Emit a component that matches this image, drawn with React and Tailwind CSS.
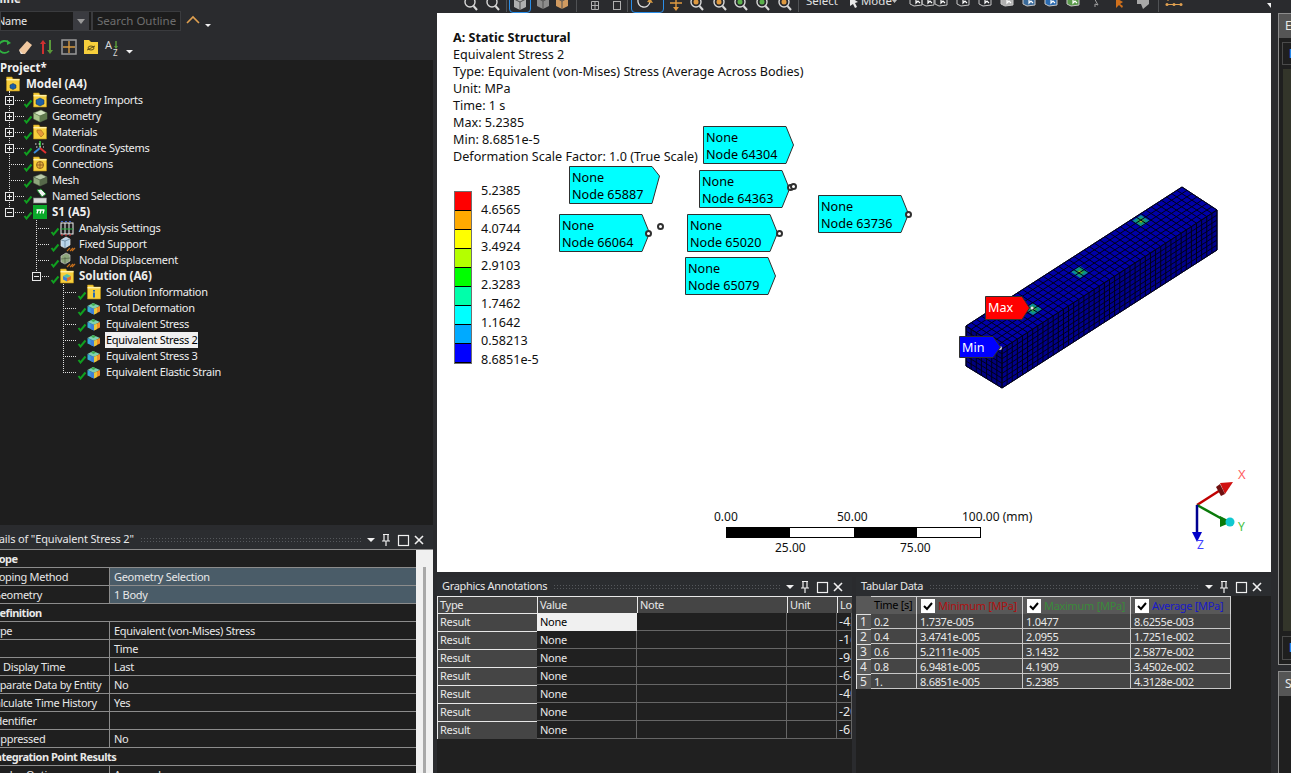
import React from 'react';

const FONT = "font-['Noto_Sans',sans-serif]";
const SMALL = 'text-[11px] tracking-[-0.3px]';

// small drawings used in the outline tree
const Folder = ({ x = 0, children }) => (
  <g transform={`translate(${x} 0)`}>
    <path d="M0.5 3 L0.5 1 L6 1 L7 3 L13.5 3 L13.5 15 L0.5 15 Z" fill="#f7cf3c" stroke="#b58a12" strokeWidth="0.6" />
    <rect x="0.5" y="3" width="13" height="1.4" fill="#fff0a8" />
    {children}
  </g>
);

const Cube = ({ x = 0, fill = '#a9c48c', dark = '#5f7a4d', top = '#d5e5c2' }) => (
  <g transform={`translate(${x} 0)`}>
    <path d="M0.5 5 L8 2 L14 5 L7 8 Z" fill={top} stroke={dark} strokeWidth="0.5" />
    <path d="M0.5 5 L7 8 L7 14 L0.5 11 Z" fill={fill} stroke={dark} strokeWidth="0.5" />
    <path d="M7 8 L14 5 L14 11 L7 14 Z" fill={dark} stroke={dark} strokeWidth="0.5" />
  </g>
);

const Result = ({ x = 0 }) => (
  <g transform={`translate(${x} 0)`}>
    <path d="M0.5 6 L6 3 L13 6 L7 9 Z" fill="#7fd0b0" />
    <path d="M4 4.8 L6 3 L9 4.4 L6.5 6 Z" fill="#3fae50" />
    <path d="M0.5 6 L7 9 L7 14.5 L0.5 11.5 Z" fill="#38a8d8" />
    <path d="M3.5 7.5 L7 9 L7 14.5 L3.5 13 Z" fill="#3f7fd8" />
    <path d="M7 9 L13 6 L13 11.5 L7 14.5 Z" fill="#f0902c" />
    <path d="M7 9 L10 7.5 L10 13 L7 14.5 Z" fill="#e8c83a" />
  </g>
);

const NODE_ICONS = {
  model: (x) => (
    <Folder x={x}>
      <path d="M4 9 L7 7.5 L10 9 L10 12 L7 13.5 L4 12 Z" fill="#1d5fa8" stroke="#0d2f55" strokeWidth="0.5" />
    </Folder>
  ),
  imports: (x) => (
    <Folder x={x}>
      <path d="M3 8 L7 6 L11 8 L11 12 L7 14 L3 12 Z" fill="#1d5fa8" stroke="#0d2f55" strokeWidth="0.5" />
    </Folder>
  ),
  geometry: (x) => <Cube x={x} />,
  materials: (x) => (
    <Folder x={x}>
      <path d="M4 6 L8 6 L11 10 L8 13 L4 8 Z" fill="#e89a3a" stroke="#8a5a12" strokeWidth="0.5" />
    </Folder>
  ),
  coords: (x) => (
    <g transform={`translate(${x} 0)`}>
      <path d="M7 1 L7 7" stroke="#2fae3a" strokeWidth="2" />
      <path d="M7 8 L1 13" stroke="#3a8ad8" strokeWidth="2" />
      <path d="M7 8 L13 13" stroke="#e03030" strokeWidth="2" />
      <path d="M2 4 L12 4 M3 7 L11 7" stroke="#e8e8e8" strokeWidth="1" strokeDasharray="1.5 2" />
    </g>
  ),
  connections: (x) => (
    <Folder x={x}>
      <circle cx="7" cy="9" r="3.5" fill="#e8b040" stroke="#7a4a10" strokeWidth="0.8" />
      <path d="M4 9 L10 9 M7 6 L7 12" stroke="#7a4a10" strokeWidth="0.7" />
    </Folder>
  ),
  mesh: (x) => <Cube x={x} fill="#8ea67c" dark="#56684a" top="#b9c9aa" />,
  named: (x) => (
    <g transform={`translate(${x} 0)`}>
      <path d="M4 2 L8 1 L13 6 L9 9 Z" fill="#f2f2f2" stroke="#1f8a2e" strokeWidth="1" />
      <rect x="0.5" y="10" width="13" height="5" fill="#d8d8d8" stroke="#808080" strokeWidth="0.6" />
    </g>
  ),
  study: (x) => (
    <g transform={`translate(${x} 0)`}>
      <rect x="0" y="1" width="14" height="14" fill="#0aa82a" />
      <path d="M3.5 6 L11.5 6 M5 6 L4 9.5 M8 6 L7 9.5 M11 6 L10 9.5" stroke="#ffffff" strokeWidth="1.3" />
    </g>
  ),
  settings: (x) => (
    <g transform={`translate(${x} 0)`}>
      <rect x="1" y="3" width="12" height="11" fill="none" stroke="#f2f2f2" strokeWidth="1" />
      <path d="M5 3 L5 14 M9 3 L9 14" stroke="#f2f2f2" strokeWidth="1" />
      <path d="M1 9 L13 9" stroke="#22b03a" strokeWidth="1" />
      <path d="M1 1.5 L13 1.5" stroke="#3a5ec8" strokeWidth="1.2" strokeDasharray="2 2" />
      <path d="M1 15 L13 15" stroke="#e03030" strokeWidth="1.2" strokeDasharray="2 2" />
    </g>
  ),
  support: (x) => (
    <g transform={`translate(${x} 0)`}>
      <path d="M1 4 L6 1 L10 3 L10 9 L5 12 L1 10 Z" fill="#b8d4ea" stroke="#e8e8e8" strokeWidth="0.7" />
      <path d="M5 5 L5 12 M1 4 L5 5 L10 3" stroke="#4a6a80" strokeWidth="0.6" fill="none" />
      <path d="M7 15 L10 12 M10 15 L13 12 M12 15 L15 12" stroke="#c8701c" strokeWidth="1.2" />
    </g>
  ),
  displacement: (x) => (
    <g transform={`translate(${x} 0)`}>
      <path d="M1 4 L6 1 L10 3 L10 9 L5 12 L1 10 Z" fill="#8ea67c" stroke="#c8c8c8" strokeWidth="0.7" />
      <path d="M5 5 L5 12 M1 7 L10 6" stroke="#4a5a40" strokeWidth="0.6" />
      <path d="M7 15 L10 12 M10 15 L13 12 M12 15 L15 12" stroke="#c8701c" strokeWidth="1.2" />
    </g>
  ),
  solution: (x) => (
    <Folder x={x}>
      <path d="M3 8 L7 6 L11 8 L7 10 Z" fill="#52c0a4" />
      <path d="M3 8 L7 10 L7 13.5 L3 11.5 Z" fill="#3f7fd8" />
      <path d="M7 10 L11 8 L11 11.5 L7 13.5 Z" fill="#e0702c" />
    </Folder>
  ),
  info: (x) => (
    <Folder x={x}>
      <rect x="6" y="6" width="2" height="1.6" fill="#2a6ab0" />
      <rect x="6" y="8.5" width="2" height="5" fill="#2a6ab0" />
    </Folder>
  ),
  result: (x) => <Result x={x} />,
};

const LEVELS = {
  1: { v: 9, h: 24, check: 24, icon: 33, text: 52 },
  2: { v: 36, h: 50, check: 51, icon: 60, text: 79 },
  3: { v: 63, h: 77, check: 78, icon: 87, text: 106 },
};

const TREE = [
  { level: 1, box: 'plus', icon: 'imports', label: 'Geometry Imports' },
  { level: 1, box: 'plus', icon: 'geometry', label: 'Geometry' },
  { level: 1, box: 'plus', icon: 'materials', label: 'Materials' },
  { level: 1, box: 'plus', icon: 'coords', label: 'Coordinate Systems' },
  { level: 1, icon: 'connections', label: 'Connections' },
  { level: 1, icon: 'mesh', label: 'Mesh' },
  { level: 1, box: 'plus', icon: 'named', label: 'Named Selections' },
  { level: 1, box: 'minus', icon: 'study', label: 'S1 (A5)', bold: true, last: true },
  { level: 2, icon: 'settings', label: 'Analysis Settings' },
  { level: 2, icon: 'support', label: 'Fixed Support' },
  { level: 2, icon: 'displacement', label: 'Nodal Displacement' },
  { level: 2, box: 'minus', icon: 'solution', label: 'Solution (A6)', bold: true, last: true },
  { level: 3, icon: 'info', label: 'Solution Information' },
  { level: 3, icon: 'result', label: 'Total Deformation' },
  { level: 3, icon: 'result', label: 'Equivalent Stress' },
  { level: 3, icon: 'result', label: 'Equivalent Stress 2', selected: true },
  { level: 3, icon: 'result', label: 'Equivalent Stress 3' },
  { level: 3, icon: 'result', label: 'Equivalent Elastic Strain', last: true },
];

const TreeRow = ({ level, box, icon, label, bold, last, selected }) => {
  const l = LEVELS[level];
  return (
    <div className="flex h-4 items-center">
      <svg width={l.text - 1} height="16" className="shrink-0">
        <path d={`M${l.v}.5 0 L${l.v}.5 ${last ? 8 : 16}`} stroke="#e0e0e0" strokeDasharray="1 1" fill="none" />
        <path d={`M${l.v} 8.5 L${l.h} 8.5`} stroke="#e0e0e0" strokeDasharray="1 1" fill="none" />
        {box && (
          <g>
            <rect x={l.v - 4 + 0.5} y="4.5" width="8" height="8" fill="#1f1f1f" stroke="#e8e8e8" />
            <path d={`M${l.v - 2} 8.5 L${l.v + 3} 8.5`} stroke="#e8e8e8" />
            {box === 'plus' && <path d={`M${l.v}.5 6 L${l.v}.5 11`} stroke="#e8e8e8" />}
          </g>
        )}
        {NODE_ICONS[icon](l.icon)}
        <path d={`M${l.check + 0.5} 12 L${l.check + 2.5} 14.5 L${l.check + 7.5} 8.5`} stroke="#10a020" strokeWidth="2" fill="none" />
      </svg>
      <span
        className={`px-px leading-4 whitespace-nowrap ${bold ? 'text-[11.5px] font-bold' : SMALL} ${selected ? 'bg-[#f0f0f0] text-black' : 'text-[#eeeeee]'}`}
      >
        {label}
      </span>
    </div>
  );
};

const WinButtons = () => (
  <svg width="58" height="14" className="shrink-0">
    <path d="M0 5 L8 5 L4 9 Z" fill="#f0f0f0" />
    <path d="M16 1.5 L22 1.5 M17 1.5 L17 7.5 M21 1.5 L21 7.5 M15 8 L23 8 M19 8 L19 13" stroke="#f0f0f0" strokeWidth="1.2" fill="none" />
    <rect x="31.5" y="2.5" width="10" height="10" stroke="#f0f0f0" strokeWidth="1.2" fill="none" />
    <path d="M48 3 L56 11 M56 3 L48 11" stroke="#f0f0f0" strokeWidth="1.6" />
  </svg>
);

// title bar of a docked panel, with the dotted grip between title and buttons
const PanelHeader = ({ title, className = '' }) => (
  <div className={`flex h-[19px] items-center gap-1.5 bg-[#2b2d30] pr-2 ${className}`}>
    <span className={`whitespace-nowrap text-[#e8e8e8] ${SMALL}`}>{title}</span>
    <div className="h-[5px] min-w-0 flex-1 bg-[radial-gradient(#55585c_0.6px,transparent_0.7px)] bg-[length:3px_3px]" />
    <WinButtons />
  </div>
);

const DETAILS = [
  { label: 'Scope', head: true, off: '-ml-[12px]' },
  { label: 'Scoping Method', value: 'Geometry Selection', blue: true, off: '-ml-[12px]' },
  { label: 'Geometry', value: '1 Body', blue: true, off: '-ml-[7px]' },
  { label: 'Definition', head: true, off: '-ml-[8px]' },
  { label: 'Type', value: 'Equivalent (von-Mises) Stress', off: '-ml-[11px]' },
  { label: 'By', value: 'Time', off: '-ml-[20px]' },
  { label: 'Display Time', value: 'Last', off: 'ml-[3px]' },
  { label: 'Separate Data by Entity', value: 'No', off: '-ml-[12px]' },
  { label: 'Calculate Time History', value: 'Yes', off: '-ml-[12px]' },
  { label: 'Identifier', value: '', off: '-ml-[8px]' },
  { label: 'Suppressed', value: 'No', off: '-ml-[12px]' },
  { label: 'Integration Point Results', head: true, off: '-ml-[9px]' },
  { label: 'Display Option', value: 'Averaged', off: '-ml-[12px]' },
];

const DetailsRow = ({ label, value, head, blue, off }) => (
  <div className={`flex h-[18px] border-b border-[#8c8c8c] leading-[17px] text-[#e8e8e8] ${SMALL}`}>
    <div className={`overflow-hidden whitespace-nowrap ${head ? 'flex-1 font-bold tracking-[-0.5px]' : 'w-[110px] shrink-0 border-r border-[#8c8c8c]'}`}>
      <div className={off}>{label}</div>
    </div>
    {!head && <div className={`flex-1 pl-[4px] ${blue ? 'bg-[#4a5c68]' : ''}`}>{value}</div>}
  </div>
);

const Outline = () => (
  <div className="flex h-[525px] flex-col">
    <div className="h-[9px] overflow-hidden bg-[#2a2b2e]">
      <div className="-ml-[22px] -mt-[9px] text-[11.5px] font-bold leading-4 text-[#e8e8e8]">Outline</div>
    </div>
    <div className="flex h-6 items-center bg-[#2a2b2e]">
      <div className="flex h-[20px] w-[92px] items-center overflow-hidden border border-[#3a3b3e] bg-[#1c1c1c]">
        <span className={`-ml-[4px] w-[76px] text-[#e8e8e8] ${SMALL}`}>Name</span>
        <div className="flex h-full w-[16px] items-center justify-center bg-[#3a3b40]">
          <svg width="8" height="5"><path d="M0 0 L8 0 L4 5 Z" fill="#9a9a9a" /></svg>
        </div>
      </div>
      <div className="flex h-[20px] w-[89px] items-center border border-[#3a3b3e] bg-[#1c1c1c] pl-[4px] text-[11.5px] text-[#6e6e6e]">
        Search Outline
      </div>
      <svg width="30" height="14" className="ml-[4px]">
        <path d="M2 9 L8 3 L14 9" stroke="#e0a050" strokeWidth="1.6" fill="none" />
        <path d="M20 10 L26 10 L23 13 Z" fill="#f0f0f0" />
      </svg>
    </div>
    <div className="flex h-[27px] items-center bg-[#2a2b2e]">
      <svg width="136" height="20">
        <path d="M8 5 A6 6 0 1 0 9 14" stroke="#30b040" strokeWidth="1.8" fill="none" />
        <path d="M7 3 L11 6 L7 8 Z" fill="#30b040" />
        <path d="M19 13 L27 4 L32 8 L25 17 L21 17 Z" fill="#f0c8a0" />
        <path d="M19 13 L23 17 L21 17 Z" fill="#e8e8e8" />
        <path d="M43 6 L43 17" stroke="#d03030" strokeWidth="2" />
        <path d="M40 7 L43 3 L46 7 Z" fill="#d03030" />
        <path d="M50 3 L50 14" stroke="#5a9a3a" strokeWidth="2" />
        <path d="M47 13 L50 17 L53 13 Z" fill="#5a9a3a" />
        <rect x="62" y="3" width="14" height="14" fill="none" stroke="#9a9a9a" strokeWidth="1.5" />
        <path d="M69 4 L69 16 M63 10 L75 10" stroke="#d89a40" strokeWidth="1.4" />
        <path d="M84 3 L89 3 L91 5 L98 5 L98 17 L84 17 Z" fill="#f7cf3c" />
        <path d="M87 13 L95 9 M88 11 A3 2 0 0 1 94 11 A3 2 0 0 1 88 11" stroke="#3a3010" strokeWidth="0.8" fill="none" />
        <path d="M116 4 L116 11" stroke="#5a9a3a" strokeWidth="1.5" />
        <path d="M114 9 L116 12 L118 9 Z" fill="#5a9a3a" />
        <path d="M126 13 L133 13 L129.5 16.5 Z" fill="#f0f0f0" />
        <text x="105" y="12" fontSize="11" fill="#d8d8d8">A</text>
        <text x="113" y="19" fontSize="8" fill="#d8d8d8">Z</text>
      </svg>
    </div>
    <div className="flex-1 overflow-hidden bg-[#1e1e1e] text-[11.5px] leading-4 text-[#f0f0f0]">
      <div className="h-4 font-bold">Project*</div>
      <div className="flex h-4 items-center">
        <svg width="25" height="16" className="shrink-0">
          {NODE_ICONS.model(6)}
          <path d="M9.5 15 L9.5 16" stroke="#e0e0e0" />
        </svg>
        <span className="ml-px font-bold">Model (A4)</span>
      </div>
      {TREE.map((row) => (
        <TreeRow key={row.label} {...row} />
      ))}
    </div>
  </div>
);

const Details = () => (
  <div className="mt-[5px] flex min-h-0 flex-1 flex-col overflow-hidden">
    <PanelHeader title={<span className="-ml-[19px] block tracking-[-0.15px]">Details of "Equivalent Stress 2"</span>} />
    <div className="flex flex-1 overflow-hidden border-t border-[#8c8c8c] bg-[#1f1f1f]">
      <div className="w-[416px] shrink-0 overflow-hidden">
        {DETAILS.map((row) => (
          <DetailsRow key={row.label} {...row} />
        ))}
      </div>
      <div className="flex w-[17px] justify-center bg-[#f0f0f0] pt-[17px]">
        <div className="h-full w-[3px] bg-[#a8a8a8]" />
      </div>
    </div>
  </div>
);

const Mag = ({ className = '', dot }) => (
  <svg width="15" height="16" className={`shrink-0 ${className}`}>
    <circle cx="7" cy="6" r="5" fill="none" stroke="#d8d8d8" strokeWidth="1.4" />
    {dot && <circle cx="7" cy="6" r="2.5" fill={dot} />}
    <path d="M10.5 10 L14 14" stroke="#d8d8d8" strokeWidth="2" />
  </svg>
);

const ToolCube = ({ className = '', fill = '#8c8c8c' }) => (
  <svg width="15" height="16" className={`shrink-0 ${className}`}>
    <path d="M1 2 L7 0 L13 2 L13 10 L7 13 L1 10 Z" fill={fill} />
    <path d="M7 5 L7 13 M1 2 L7 5 L13 2" stroke="#505050" fill="none" />
  </svg>
);

const Sep = ({ className = '' }) => <div className={`h-[12px] w-px shrink-0 bg-[#505255] ${className}`} />;

const SelectIcon = ({ className = '', tint = '#d0d0d0' }) => (
  <svg width="14" height="14" className={`shrink-0 ${className}`}>
    <path d="M1 2 L5 0 L13 0 L13 9 L5 10 L1 8 Z" fill={tint === '#d0d0d0' ? 'none' : tint} stroke="#c8c8c8" />
    <path d="M7 1 L7 7 L9 5 L11 7" stroke="#ffffff" strokeWidth="1.2" fill="none" />
  </svg>
);

const GraphicsToolbar = () => (
  <div className="flex h-[13px] items-start overflow-hidden bg-[#2a2b2e] text-[11.5px] text-[#e0e0e0]">
    <div className="-mt-[4px] flex h-4 items-start">
      <Mag className="ml-[26px]" />
      <Mag className="ml-[7px]" />
      <Sep className="ml-[6px] mt-[4px]" />
      <div className="-mt-[3px] ml-[2px] flex h-[20px] w-[22px] shrink-0 justify-center rounded-sm border border-[#2a8ee8] pt-[3px]">
        <ToolCube fill="#b0b0b0" />
      </div>
      <ToolCube className="ml-[5px]" />
      <ToolCube className="ml-[4px]" fill="#d09a60" />
      <Sep className="ml-[6px] mt-[4px]" />
      <svg width="10" height="16" className="ml-[13px] shrink-0">
        <path d="M1.5 5.5 H8.5 V13.5 H1.5 Z M5 5.5 V13.5 M1.5 9.5 H8.5" stroke="#b0b0b0" fill="none" />
      </svg>
      <svg width="10" height="16" className="ml-[12px] shrink-0">
        <rect x="1.5" y="5.5" width="7" height="8" stroke="#b0b0b0" fill="none" />
      </svg>
      <Sep className="ml-[5px] mt-[4px]" />
      <div className="-mt-[3px] ml-[3px] h-[20px] w-[33px] shrink-0 rounded-sm border border-[#2a8ee8]">
        <svg width="31" height="18">
          <path d="M6 6 A6 6 0 0 0 18 8" stroke="#e0e0e0" strokeWidth="1.3" fill="none" />
          <path d="M18 4 L21 9 L15 8 Z" fill="#d89a40" />
        </svg>
      </div>
      <svg width="16" height="16" className="ml-[4px] shrink-0">
        <path d="M8 2 L8 13 M2 7 L14 7" stroke="#e09a40" strokeWidth="1.4" />
        <path d="M5 11 L8 15 L11 11 Z" fill="#e09a40" />
      </svg>
      <Mag className="ml-[5px]" dot="#e09a40" />
      <Mag className="ml-[8px]" dot="#e09a40" />
      <Mag className="ml-[6px]" dot="#5ab04a" />
      <Mag className="ml-[7px]" dot="#5ab04a" />
      <Mag className="ml-[7px]" dot="#e09a40" />
      <Sep className="ml-[6px] mt-[4px]" />
      <span className="-mt-[4px] ml-[7px] shrink-0">Select</span>
      <svg width="10" height="14" className="ml-[11px] shrink-0">
        <path d="M1 2 L1 11 L4 9 L6 13 L8 12 L6 8 L9 7 Z" fill="#e8e8e8" transform="translate(0 -1)" />
      </svg>
      <span className="-mt-[4px] ml-[2px] shrink-0">Mode</span>
      <svg width="6" height="8" className="mt-[2px] shrink-0">
        <path d="M0 2 L5 2 L2.5 5 Z" fill="#c0c0c0" />
      </svg>
      <SelectIcon className="ml-[11px]" />
      <SelectIcon className="-ml-[2px]" />
      <SelectIcon className="-ml-px" />
      <SelectIcon className="ml-[8px]" />
      <SelectIcon className="ml-[8px]" />
      <SelectIcon className="ml-[8px]" tint="#b0b0b0" />
      <SelectIcon className="ml-[8px]" tint="#3a6a9a" />
      <SelectIcon className="ml-[8px]" tint="#2a6ab0" />
      <SelectIcon className="ml-[8px]" tint="#5a9a4a" />
      <svg width="8" height="14" className="ml-[12px] shrink-0">
        <path d="M1 0 L6 9 L3 8 L3 11" stroke="#a0a0a0" fill="none" />
      </svg>
      <svg width="9" height="14" className="ml-[15px] shrink-0">
        <path d="M1 2 L1 12 L4 9 L7 12 L8 10 L5 8 L8 6 Z" fill="#d0701c" />
      </svg>
      <svg width="16" height="14" className="ml-[11px] shrink-0">
        <path d="M2 2 L14 1 L14 8 L8 13 L6 8 L2 8 Z" fill="#a8a8a8" />
      </svg>
      <Sep className="ml-[7px] mt-[4px]" />
      <svg width="18" height="16" className="ml-[6px] shrink-0">
        <path d="M1 8.5 L16 8.5 M3 3 L3 5" stroke="#e0a050" fill="none" />
        <circle cx="2" cy="8.5" r="1.5" fill="#e0a050" />
        <circle cx="9" cy="8.5" r="1.5" fill="#e0a050" />
        <circle cx="16" cy="8.5" r="1.5" fill="#e0a050" />
      </svg>
      <svg width="10" height="10" className="ml-[84px] mt-[6px] shrink-0">
        <path d="M0 1 L8 1 L4 6 Z" fill="#f0f0f0" />
      </svg>
    </div>
  </div>
);

const LEGEND_COLORS = ['#ff0000', '#ffaa00', '#ffff00', '#b4ff00', '#00ff00', '#00ffaa', '#00ffff', '#00aaff', '#0000ff'];
const LEGEND_LABELS = ['5.2385', '4.6565', '4.0744', '3.4924', '2.9103', '2.3283', '1.7462', '1.1642', '0.58213', '8.6851e-5'];

const Legend = () => (
  <div className="ml-px mt-[26px] flex items-start">
    <div className="w-[18px] border border-[#707070]">
      {LEGEND_COLORS.map((c) => (
        <div key={c} className="h-[19px] border-b border-black" style={{ backgroundColor: c }} />
      ))}
    </div>
    <div className="-mt-[10px] ml-[9px]">
      {LEGEND_LABELS.map((t) => (
        <div key={t} className="h-[18.8px] text-[12.6px] leading-[19px]">{t}</div>
      ))}
    </div>
  </div>
);

// probe label on the model, text is real and the outline drawn behind it
const Callout = ({ className, top, bottom, w = 91, h = 38, py = 19, fill = '#00ffff', text = 'text-black' }) => (
  <div className={`absolute ${className}`}>
    <svg width={w} height={h} className="block">
      <path
        d={`M0.5 0.5 L${w - 8} 0.5 L${w - 0.5} ${py} L${w - 8} ${h - 0.5} L0.5 ${h - 0.5} Z`}
        fill={fill}
        stroke="#303030"
      />
    </svg>
    <div className={`absolute left-[3px] top-[3px] text-[12.6px] leading-[17px] ${text}`}>
      <div>{top}</div>
      {bottom && <div>{bottom}</div>}
    </div>
  </div>
);

const Ring = ({ className }) => (
  <div className={`absolute h-[7px] w-[7px] rounded-full border-2 border-[#303030] bg-white ${className}`} />
);

const lerp = (a, b, t) => [a[0] + (b[0] - a[0]) * t, a[1] + (b[1] - a[1]) * t];

// grid lines of one quad face of the mesh
const faceLines = (p1, p2, p3, p4, nu, nv) => {
  let d = '';
  for (let i = 0; i <= nu; i++) {
    const a = lerp(p1, p2, i / nu);
    const b = lerp(p4, p3, i / nu);
    d += `M${a[0]} ${a[1]} L${b[0]} ${b[1]} `;
  }
  for (let j = 0; j <= nv; j++) {
    const a = lerp(p1, p4, j / nv);
    const b = lerp(p2, p3, j / nv);
    d += `M${a[0]} ${a[1]} L${b[0]} ${b[1]} `;
  }
  return d;
};

const A = [966, 326];
const B = [1182, 187];
const C = [1217, 210];
const D = [1002, 349];
const C2 = [1217, 250];
const D2 = [1002, 388];
const A2 = [966, 366];

const poly = (...pts) => pts.map((p) => p.join(',')).join(' ');

const HotSpot = ({ x, y }) => (
  <g transform={`translate(${x} ${y})`}>
    <path d="M-9 0 L0 -6 L9 0 L0 6 Z" fill="#0a8a98" />
    <path d="M-5 0 L0 -3.5 L5 0 L0 3.5 Z" fill="#20a050" />
    <path d="M-2 0 L0 -1.5 L2 0 L0 1.5 Z" fill="#a0b020" />
  </g>
);

const Beam = () => (
  <svg viewBox="960 180 265 215" width="265" height="215" className="absolute left-[523px] top-[167px]">
    <polygon points={poly(A, B, C, D)} fill="#0000a8" />
    <polygon points={poly(D, C, C2, D2)} fill="#00008c" />
    <polygon points={poly(A, D, D2, A2)} fill="#000080" />
    <HotSpot x={1033} y={309} />
    <HotSpot x={1080} y={272} />
    <HotSpot x={1141} y={221} />
    <path d={faceLines(A, B, C, D, 42, 7)} stroke="#000018" strokeWidth="1" fill="none" />
    <path d={faceLines(D, C, C2, D2, 42, 8)} stroke="#000018" strokeWidth="1" fill="none" />
    <path d={faceLines(A, D, D2, A2, 7, 8)} stroke="#000018" strokeWidth="1" fill="none" />
    <polygon points={poly(A, B, C, C2, D2, A2)} fill="none" stroke="#000020" />
    <circle cx="1032" cy="308" r="1.5" fill="#e8e8e8" />
    <circle cx="1000" cy="348" r="2" fill="#d8d8d8" />
  </svg>
);

const Triad = () => (
  <svg width="70" height="90" viewBox="1190 465 70 90" className="absolute left-[753px] top-[452px]">
    <path d="M1197 505 L1222 489" stroke="#c00000" strokeWidth="2.5" />
    <path d="M1220 483 L1233 482 L1225 494 Z" fill="#d01010" />
    <path d="M1220 484 L1225 494 L1221 496 L1216 487 Z" fill="#701010" />
    <path d="M1197 505 L1224 520" stroke="#0a7a0a" strokeWidth="2.5" />
    <path d="M1220 516 L1232 522 L1220 527 Z" fill="#0a7a0a" />
    <circle cx="1230" cy="522" r="4.5" fill="#10c8d0" />
    <path d="M1197 505 L1197 532" stroke="#000090" strokeWidth="2.5" />
    <path d="M1192 532 L1202 532 L1197 542 Z" fill="#0000c8" />
    <text x="1238" y="479" fontSize="13" fill="#ff6060">X</text>
    <text x="1238" y="531" fontSize="12" fill="#40c040">Y</text>
    <text x="1197" y="549" fontSize="12" fill="#4040ff">Z</text>
  </svg>
);

const ScaleBar = () => (
  <div className="absolute left-[277px] top-[496px] h-[45px] w-[330px] text-[12px] leading-4 text-[#101010]">
    <div className="flex h-[18px]">
      <span className="w-[123px]">0.00</span>
      <span className="w-[125px]">50.00</span>
      <span>100.00 (mm)</span>
    </div>
    <div className="ml-[12px] flex h-[11px] w-[255px] border border-black">
      <div className="w-1/4 bg-black" />
      <div className="w-1/4 bg-white" />
      <div className="w-1/4 bg-black" />
      <div className="w-1/4 bg-white" />
    </div>
    <div className="mt-[2px] flex pl-[61px]">
      <span className="w-[125px]">25.00</span>
      <span>75.00</span>
    </div>
  </div>
);

const Viewport = () => (
  <div className="relative h-[559px] overflow-hidden bg-white pl-4 pt-4 text-[12.6px] leading-[17px] text-[#101010]">
    <div className="font-bold">A: Static Structural</div>
    <div>Equivalent Stress 2</div>
    <div>Type: Equivalent (von-Mises) Stress (Average Across Bodies)</div>
    <div>Unit: MPa</div>
    <div>Time: 1 s</div>
    <div>Max: 5.2385</div>
    <div>Min: 8.6851e-5</div>
    <div>Deformation Scale Factor: 1.0 (True Scale)</div>
    <Legend />
    <Callout className="left-[132px] top-[153px]" top="None" bottom="Node 65887" py={10} />
    <Callout className="left-[122px] top-[201px]" top="None" bottom="Node 66064" />
    <Callout className="left-[266px] top-[113px]" top="None" bottom="Node 64304" />
    <Callout className="left-[262px] top-[157px]" top="None" bottom="Node 64363" />
    <Callout className="left-[250px] top-[201px]" top="None" bottom="Node 65020" />
    <Callout className="left-[248px] top-[244px]" top="None" bottom="Node 65079" />
    <Callout className="left-[381px] top-[182px]" top="None" bottom="Node 63736" />
    <Ring className="left-[220px] top-[210px]" />
    <Ring className="left-[208px] top-[217px]" />
    <Ring className="left-[350px] top-[171px]" />
    <Ring className="left-[353px] top-[170px]" />
    <Ring className="left-[339px] top-[217px]" />
    <Ring className="left-[468px] top-[198px]" />
    <Beam />
    <Callout className="left-[548px] top-[283px]" top="Max" w={45} h={24} py={12} fill="#ff0000" text="text-white" />
    <Callout className="left-[522px] top-[323px]" top="Min" w={42} h={22} py={11} fill="#0000ff" text="text-white" />
    <ScaleBar />
    <Triad />
  </div>
);

const ANNOTATIONS = ['-43.6', '-16.2', '-94.1', '-64.3', '-40.8', '-20.5', '-6.1'];

const HeadCell = ({ children }) => (
  <div className="h-[17px] overflow-hidden border-l border-t border-[#e8e8e8] bg-[#454545] pl-[2px] leading-4">{children}</div>
);

const DarkCell = ({ children }) => (
  <div className="h-[18px] overflow-hidden border-b border-r border-[#666666] pl-[2px] leading-[17px]">{children}</div>
);

const GraphicsAnnotations = () => (
  <div className="flex w-[415px] flex-col">
    <PanelHeader title="Graphics Annotations" className="pl-[5px]" />
    <div className={`flex-1 bg-[#202020] text-[#e8e8e8] ${SMALL}`}>
      <div className="grid grid-cols-[100px_100px_150px_50px_15px]">
        {['Type', 'Value', 'Note', 'Unit', 'Location'].map((h) => (
          <HeadCell key={h}>{h}</HeadCell>
        ))}
        {ANNOTATIONS.map((loc, i) => (
          <React.Fragment key={loc}>
            <div className="h-[18px] border-l border-t border-[#e8e8e8] bg-[#454545] pl-[2px] leading-[16px]">Result</div>
            {i === 0 ? (
              <div className="h-[18px] bg-[#f0f0f0] pl-[3px] leading-[17px] text-black">None</div>
            ) : (
              <DarkCell>
                <span className="pl-px">None</span>
              </DarkCell>
            )}
            <DarkCell />
            <DarkCell />
            <DarkCell>
              <span className="text-[12.5px] tracking-normal">{loc}</span>
            </DarkCell>
          </React.Fragment>
        ))}
      </div>
    </div>
  </div>
);

const TABULAR = [
  ['1', '0.2', '1.737e-005', '1.0477', '8.6255e-003'],
  ['2', '0.4', '3.4741e-005', '2.0955', '1.7251e-002'],
  ['3', '0.6', '5.2111e-005', '3.1432', '2.5877e-002'],
  ['4', '0.8', '6.9481e-005', '4.1909', '3.4502e-002'],
  ['5', '1.', '8.6851e-005', '5.2385', '4.3128e-002'],
];

const CheckHead = ({ label, color }) => (
  <div className="flex h-[18px] items-center gap-[3px] overflow-hidden whitespace-nowrap border-r border-t border-[#d0d0d0] bg-[#585858] pl-[4px] leading-4">
    <svg width="14" height="14" className="shrink-0">
      <rect width="14" height="14" fill="#ffffff" />
      <path d="M3 7 L6 10 L11 4" stroke="#000000" strokeWidth="2" fill="none" />
    </svg>
    <span className={color}>{label}</span>
  </div>
);

const TabularData = () => (
  <div className="ml-1 flex w-[415px] flex-col">
    <PanelHeader title="Tabular Data" className="pl-[5px]" />
    <div className={`flex-1 bg-[#202020] text-[#e8e8e8] ${SMALL}`}>
      <div className="grid w-[375px] grid-cols-[15px_46px_106px_108px_100px]">
        <div className="h-[18px] bg-[#585858]" />
        <div className="h-[18px] whitespace-nowrap border-r border-t border-[#d0d0d0] bg-[#585858] pl-[3px] leading-4 text-black">Time [s]</div>
        <CheckHead label="Minimum [MPa]" color="text-[#b01010]" />
        <CheckHead label="Maximum [MPa]" color="text-[#3a8a3a]" />
        <CheckHead label="Average [MPa]" color="text-[#1818c8]" />
        {TABULAR.map((row) => (
          <React.Fragment key={row[0]}>
            <div className="h-[15px] border-l border-t border-[#e0e0e0] bg-[#585858] pl-[3px] pt-px text-[12px] leading-[12px] tracking-normal">{row[0]}</div>
            {row.slice(1).map((v) => (
              <div key={v} className="h-[15px] border-b border-r border-[#c8c8c8] bg-[#454545] pl-[3px] pt-[2px] leading-[12px]">
                {v}
              </div>
            ))}
          </React.Fragment>
        ))}
      </div>
    </div>
  </div>
);

const RightDock = () => (
  <div className="ml-[7px] flex w-[13px] flex-col overflow-hidden pt-[13px] text-[12px] text-[#e8e8e8]">
    <div className="h-[652px] border-l border-t border-b border-[#8c8c8c] bg-[#1f1f1f]">
      <div className="h-6 whitespace-nowrap bg-[#555555] pl-[6px] leading-6">Equivalent</div>
      <div className="ml-[3px] mt-[4px] h-[23px] border-l border-t border-b border-[#4a4a4a] pl-[6px] font-bold leading-[22px] text-[#2a8ee8]">D</div>
      <div className="ml-[4px] mt-[4px] h-[562px] bg-[#33352a]" />
      <div className="ml-[3px] mt-[5px] h-[24px] border-l border-t border-b border-[#4a4a4a] pl-[6px] font-bold leading-[22px] text-[#2a8ee8]">D</div>
    </div>
    <div className="mt-[6px] flex-1 border-l border-t border-[#8c8c8c] bg-[#1f1f1f]">
      <div className="h-6 whitespace-nowrap bg-[#555555] pl-[6px] leading-6">Selection</div>
    </div>
  </div>
);

export default function App() {
  return (
    <div className={`flex h-[773px] w-[1291px] overflow-hidden bg-[#2a2b2e] ${FONT}`}>
      <div className="flex w-[433px] shrink-0 flex-col">
        <Outline />
        <Details />
      </div>
      <div className="ml-1 flex w-[834px] shrink-0 flex-col">
        <GraphicsToolbar />
        <Viewport />
        <div className="mt-[5px] flex min-h-0 flex-1">
          <GraphicsAnnotations />
          <TabularData />
        </div>
      </div>
      <RightDock />
    </div>
  );
}
